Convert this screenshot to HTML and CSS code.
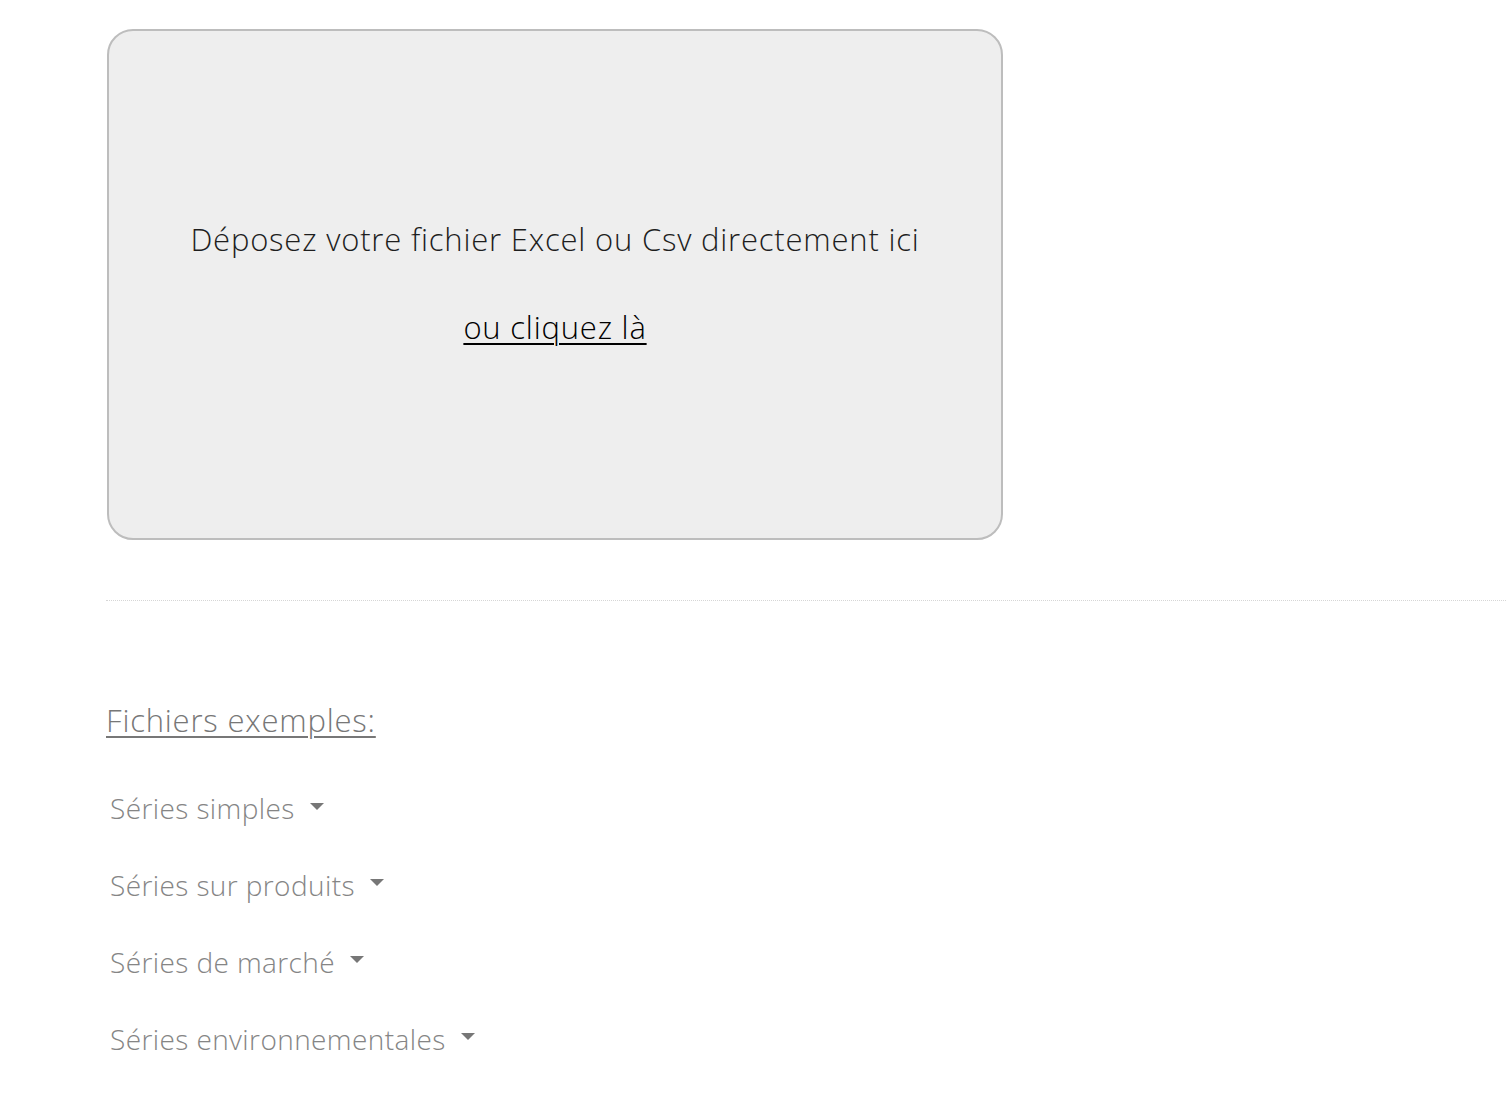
FILE: index.html
```html
<!DOCTYPE html>
<html lang="fr">
<head>
<meta charset="utf-8">
<link rel="stylesheet" href="styles.css">
</head>
<body>
<div class="page">
  <div class="dropzone">
    <p class="drop-text">Déposez votre fichier Excel ou Csv directement ici</p>
    <a class="drop-link" href="#">ou cliquez là</a>
  </div>
  <hr class="divider">
  <div class="examples">
    <a class="examples-title" href="#">Fichiers exemples:</a>
    <ul class="example-list">
      <li class="example-item">Séries simples <span class="caret"></span></li>
      <li class="example-item">Séries sur produits <span class="caret"></span></li>
      <li class="example-item">Séries de marché <span class="caret"></span></li>
      <li class="example-item">Séries environnementales <span class="caret"></span></li>
    </ul>
  </div>
</div>
</body>
</html>
```
FILE: styles.css
```css
html, body {
  margin: 0;
  padding: 0;
  background: #fff;
}
body {
  font-family: "Open Sans", "Noto Sans", sans-serif;
  font-weight: 300;
  font-size: 31px;
  letter-spacing: 0.8px;
  color: #222;
}
.page {
  padding: 29px 0 0 106px;
}
.dropzone {
  box-sizing: border-box;
  width: 896px;
  height: 511px;
  margin-left: 1px;
  border: 2px solid #bdbdbd;
  border-radius: 26px;
  background: #eeeeee;
  display: flex;
  flex-direction: column;
  align-items: center;
  justify-content: center;
  gap: 50px;
}
.drop-text {
  margin: 0;
  line-height: 38px;
  color: #1e1e1e;
  margin-top: -3px;
}
.drop-link {
  line-height: 38px;
  color: #000;
  text-decoration: underline;
  text-underline-offset: 4px;
  text-decoration-thickness: 2px;
}
.divider {
  margin: 60px 0 0 0;
  border: 0;
  border-top: 1px dotted #d6d6d6;
  height: 0;
}
.examples {
  padding-top: 98px;
}
.examples-title {
  display: inline-block;
  color: #777;
  line-height: 38px;
  text-decoration: underline;
  text-underline-offset: 4px;
  text-decoration-thickness: 2px;
}
.example-list {
  list-style: none;
  margin: 48px 0 0 0;
  padding: 0 0 0 4px;
}
.example-item {
  color: #858585;
  font-size: 28px;
  letter-spacing: 0.4px;
  line-height: 38px;
  margin-bottom: 38.9px;
  display: flex;
  align-items: center;
  gap: 15px;
}
.caret {
  width: 0;
  height: 0;
  border-left: 7.5px solid transparent;
  border-right: 7.5px solid transparent;
  border-top: 7.5px solid #777;
  margin-top: -4px;
}
```
